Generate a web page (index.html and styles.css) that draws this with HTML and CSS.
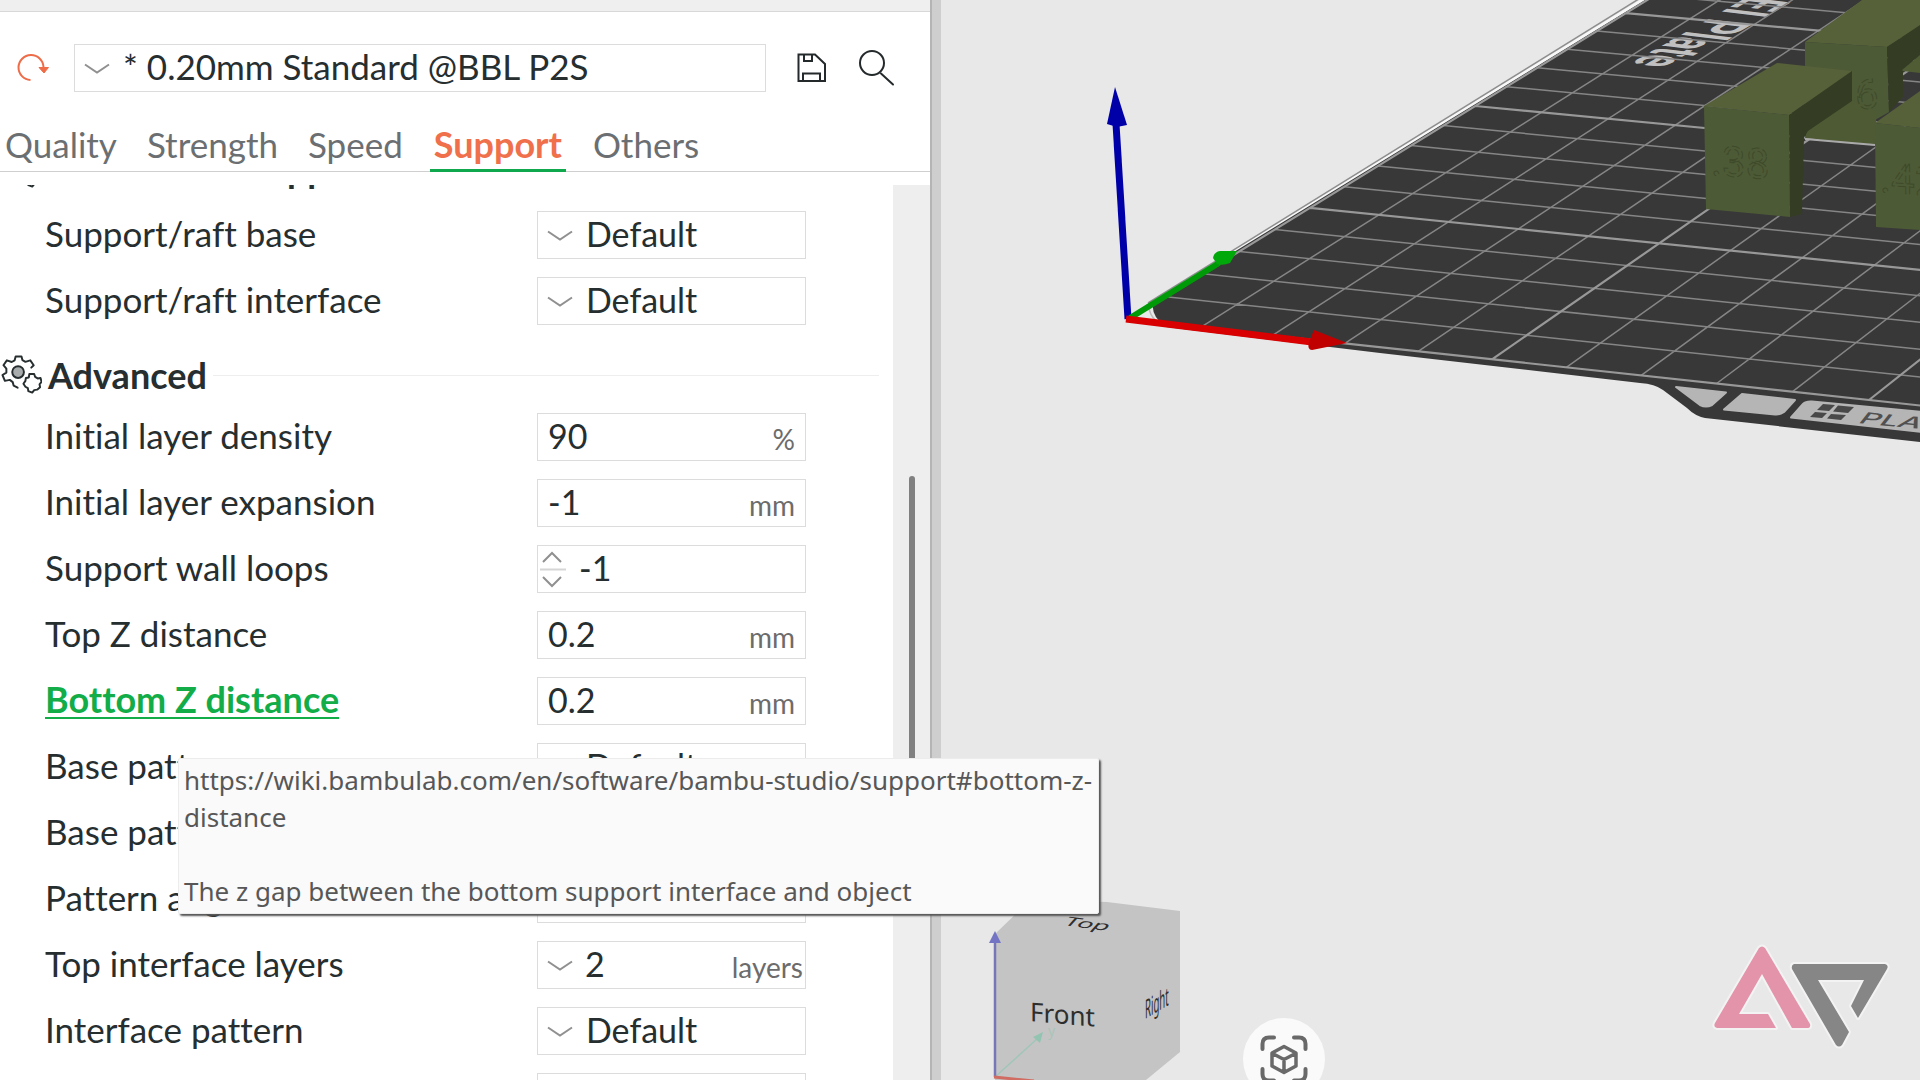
FILE: index.html
```html
<!DOCTYPE html>
<html lang="en">
<head>
<meta charset="utf-8">
<title>Print settings</title>
<link rel="stylesheet" href="styles.css">
</head>
<body>
<svg class="defs" aria-hidden="true">
  <symbol id="chevron" viewBox="0 0 26 12"><path d="M1 1.500L13 9.500L25 1.500" fill="none" stroke="#909090" stroke-width="2"/></symbol>
  <symbol id="gears" viewBox="0 0 42 40">
    <path d="M31 12.500l2.500-2.500-3.500-5-5 1.500-3-1.700L21 1h-6l-1 4-3 1.700L6 5 2.500 10l3 3.500v4L1.500 20 4 26l5-1 3 2.300L13 31l4 2" fill="none" stroke="#262e30" stroke-width="2" stroke-linejoin="round" stroke-linecap="round"/>
    <circle cx="17.500" cy="17" r="6" fill="#a8acac" stroke="#262e30" stroke-width="2"/>
    <path d="M29 19h5l1 3 2.500 1.500 3-.5 1 4-2 2.500.5 3-3 2.500-3 .5L32 38l-4-1.500-.5-3-2.500-1.500L23 29l2-3 .5-3 3-.5z" fill="#fff" stroke="#262e30" stroke-width="2" stroke-linejoin="round"/>
  </symbol>
</svg>
<div class="app">
  <section class="panel">
    <div class="strip"></div>
    <header class="preset">
      <button class="icon-btn reset" aria-label="Reset preset">
        <svg width="32" height="30" viewBox="0 0 32 30"><path d="M13.500 27A12.500 12.500 0 1 1 26.500 14" fill="none" stroke="#ee6c48" stroke-width="2"/><path d="M22 14.500h9.500L27 20z" fill="#ee6c48" stroke="#ee6c48" stroke-linejoin="round"/></svg>
      </button>
      <div class="field preset-field">
        <svg class="chev" aria-hidden="true"><use href="#chevron"/></svg>
        <select aria-label="Preset"><option>* 0.20mm Standard @BBL P2S</option></select>
      </div>
      <button class="icon-btn save" aria-label="Save">
        <svg width="30" height="30" viewBox="0 0 30 30" fill="none" stroke="#24292b" stroke-width="2"><path d="M2.500 1.500H18L28 11v17H1.500V1.500zM7 2v6h8V2M6 28v-7.500h17V28"/></svg>
      </button>
      <button class="icon-btn" aria-label="Search">
        <svg width="36" height="36" viewBox="0 0 36 36" fill="none" stroke="#24292b" stroke-width="2"><circle cx="13" cy="13" r="12"/><path d="M22 23.500L34 34.500" stroke-linecap="round"/></svg>
      </button>
    </header>
    <nav class="tabs">
      <a href="#quality">Quality</a>
      <a href="#strength">Strength</a>
      <a href="#speed">Speed</a>
      <a href="#support" class="active" aria-current="page">Support</a>
      <a href="#others">Others</a>
    </nav>
    <div class="body">
      <form class="settings">
        <h2 class="group first"><svg class="gear"><use href="#gears"/></svg>Filament for supports</h2>
        <div class="row"><label for="base">Support/raft base</label><div class="field"><svg class="chev"><use href="#chevron"/></svg><select id="base"><option>Default</option></select></div></div>
        <div class="row"><label for="iface">Support/raft interface</label><div class="field"><svg class="chev"><use href="#chevron"/></svg><select id="iface"><option>Default</option></select></div></div>
        <h2 class="group"><svg class="gear"><use href="#gears"/></svg>Advanced</h2>
        <div class="row"><label for="density">Initial layer density</label><div class="field"><input id="density" value="90"><span class="unit">%</span></div></div>
        <div class="row"><label for="expansion">Initial layer expansion</label><div class="field"><input id="expansion" value="-1"><span class="unit">mm</span></div></div>
        <div class="row"><label for="loops">Support wall loops</label><div class="field"><svg class="spin" viewBox="0 0 28 38" fill="none" stroke="#909090" stroke-width="2"><path d="M4 12L13 3L22 12M4 27L13 36L22 27"/><path d="M1 19.500H27" stroke="#d5d5d5"/></svg><input id="loops" class="spun" value="-1"></div></div>
        <div class="row"><label for="topz">Top Z distance</label><div class="field"><input id="topz" value="0.2"><span class="unit">mm</span></div></div>
        <div class="row"><label for="bottomz" class="wiki">Bottom Z distance</label><div class="field"><input id="bottomz" value="0.2"><span class="unit">mm</span></div></div>
        <div class="row"><label for="pattern">Base pattern</label><div class="field"><svg class="chev"><use href="#chevron"/></svg><select id="pattern"><option>Default</option></select></div></div>
        <div class="row"><label for="spacing">Base pattern spacing</label><div class="field"><input id="spacing" value="2.5"><span class="unit">mm</span></div></div>
        <div class="row"><label for="angle">Pattern angle</label><div class="field"><input id="angle" value="0"><span class="unit">°</span></div></div>
        <div class="row"><label for="layers">Top interface layers</label><div class="field"><svg class="chev"><use href="#chevron"/></svg><input id="layers" class="combo" value="2"><span class="unit tight">layers</span></div></div>
        <div class="row"><label for="ipattern">Interface pattern</label><div class="field"><svg class="chev"><use href="#chevron"/></svg><select id="ipattern"><option>Default</option></select></div></div>
        <div class="row"><label for="ispacing">Top interface spacing</label><div class="field"><input id="ispacing" value="0.5"><span class="unit">mm</span></div></div>
      </form>
      <div class="track"><div class="thumb"></div></div>
    </div>
    <div class="tooltip" role="tooltip">
      <p>https://wiki.bambulab.com/en/software/bambu-studio/support#bottom-z-<br>distance</p>
      <p>The z gap between the bottom support interface and object</p>
    </div>
  </section>
  <div class="splitter"></div>
  <main class="viewport">
    <svg class="scene" viewBox="941 0 979 1080" preserveAspectRatio="xMinYMin slice" role="img" aria-label="Build plate">
      <defs><clipPath id="plate"><path d="M1154 301Q1149 315 1166 325L1380 353L1640 383Q1655 384 1663 390L1687 408Q1695 416 1705 418L1920 442V0H1645Z"/></clipPath></defs>
      <path d="M1149 302L1640 0h8L1154 303z" fill="#f8f8f8"/>
      <path d="M1154 301Q1149 315 1166 327L1380 353L1640 383Q1655 384 1663 390L1687 408Q1695 416 1705 418L1920 442V0H1645Z" fill="#383838"/>
      <g clip-path="url(#plate)">
        <text class="plate-name" text-anchor="end" transform="matrix(-.56 .32 -.99 -.12 1630 64)">PEI Plate</text>
        <path id="grid-fine" fill="none" stroke="#858585" stroke-width="1.500"/>
        <path id="grid-bold" fill="none" stroke="#989898" stroke-width="2.200"/>
      </g>
      <path d="M1148 303L1642 -3" stroke="#8d8d8d" stroke-width="1.500"/>
      <path d="M1149 309Q1152 320 1160 323" fill="none" stroke="#bbb" stroke-width="1.500"/>
      <g fill="#b5b5b5" stroke="#b5b5b5" stroke-width="2" stroke-linejoin="round">
        <path d="M1676 387L1726 392.500L1712 405Q1706 408 1700 405z"/>
        <path d="M1742 394L1795 400L1784 412Q1780 415 1775 414.500L1724 409.500z"/>
        <path d="M1812 401.500L1922 412V432L1791 417.500L1803 404Q1806 401 1812 401.500z"/>
      </g>
      <path d="M1823 404l12 1-6 6-12-1zM1838 405.500l16 1.500-6 6-15-1.500zM1815 412l12 1-5 5-12-1zM1831 414l15 1-5 5-14-1.500z" fill="#484848"/>
      <text class="plate-tag" transform="matrix(1.600 .15 -.6 .75 1857 423)">PLA</text>
      <g>
        <path d="M1805 42L1862 0H1920V26L1887 47z" fill="#566139"/>
        <path d="M1805 42L1887 47L1889 112L1875 120V145L1820 140L1805 130z" fill="#4d5a36"/>
        <path d="M1887 47L1920 25V55L1903 69V97L1889 112z" fill="#343d24"/>
        <path d="M1902 70L1920 55V73L1903 71z" fill="#505c34"/>
        <path d="M1807 131L1852 100L1876 111V145L1805 138z" fill="#4e5a34"/>
        <path d="M1805 139L1875 145" stroke="#aaa" stroke-width="2"/>
        <path d="M1704 106L1777 63L1852 71L1789 115z" fill="#566139"/>
        <path d="M1789 115L1852 71V101L1808 131L1804 137L1802 214L1790 217z" fill="#343d24"/>
        <path d="M1704 106L1789 115L1790 217L1706 209z" fill="#4d5a36"/>
        <path d="M1875 123L1920 91V128z" fill="#566139"/>
        <path d="M1875 123L1920 128V230L1876 227z" fill="#4d5a36"/>
        <text class="carve" transform="translate(1711 175) skewY(4)">.38</text>
        <text class="carve" transform="translate(1855 109)">6</text>
        <text class="carve" transform="translate(1880 192) skewY(4)">.42</text>
      </g>
      <path d="M1128 319L1116 124" stroke="#0000a8" stroke-width="7"/><path d="M1115 87L1127 125L1117 127L1107 124z" fill="#0000a8"/>
      <path d="M1130 318L1219 263" stroke="#009a08" stroke-width="6"/><path d="M1213 258Q1214 252 1220 251L1237 251L1230 263Q1223 266 1217 264z" fill="#00a80a"/>
      <path d="M1126 319L1312 342" stroke="#d80000" stroke-width="7"/><path d="M1314 330L1347 343L1312 350Q1307 350 1309 342z" fill="#c00000"/>
      <g>
        <path d="M994 935L1030 900L1107 902L1180 911V1052L1146 1080H995z" fill="#c4c4c4"/>
        <text class="face" transform="translate(1030 1021) skewY(5)">Front</text>
        <text class="face" transform="matrix(.37 -.22 0 1 1145 1019)">Right</text>
        <text class="face" transform="matrix(1 .13 -.4 .45 1062 925)">Top</text>
        <path d="M995 1077L1038 1038" stroke="#a0c6b8" stroke-width="1.500"/><path d="M1043 1032L1040 1043L1033 1037z" fill="#93c4b1"/>
        <text class="axis" x="1048" y="1036">y</text>
        <path d="M995 1077V940" stroke="#7676b8" stroke-width="2.500"/><path d="M995 931L1001 943H989z" fill="#7474c4"/>
        <path d="M994 1077L1034 1081" stroke="#d06c62" stroke-width="3"/>
      </g>
    </svg>
    <button class="fit" aria-label="Fit view">
      <svg width="48" height="48" viewBox="0 0 48 48" fill="none" stroke="#696969" stroke-width="4" stroke-linecap="round" stroke-linejoin="round"><path d="M2.500 14V9Q2.500 2.500 9 2.500h5M34 2.500h5Q45.500 2.500 45.500 9v5M45.500 34v5Q45.500 45.500 39 45.500h-5M14 45.500H9Q2.500 45.500 2.500 39v-5"/><path d="M24 11.500L36 18V31L24 37.500L12 31V18zM12.500 18.500L24 24.500L35.500 18.500M24 25V37" stroke-width="3.500"/></svg>
    </button>
    <svg class="logo" viewBox="0 0 180 110" role="img" aria-label="AP">
      <g stroke="#f3f3f3" stroke-width="4" stroke-linejoin="round" paint-order="stroke">
        <path fill="#e394aa" d="M49 6Q52 3 55 6L100 82Q101 86 97 86H82L52 32L29 72H58L66 86H7Q3 85 5 81z"/>
        <path fill="#868686" d="M84 22H175Q179 23 177 27L148 76L141 64L154 38H108L139 90L132 103Q129 106 126 103L82 27Q81 23 84 22z"/>
      </g>
    </svg>
  </main>
</div>
<script src="scene.js"></script>
</body>
</html>
```
FILE: styles.css
```css
* { box-sizing: border-box; }
body { margin: 0; font-family: Lato, "Noto Sans", sans-serif; font-size: 35px; font-variant-ligatures: none; color: #262e30; background: #e8e8e8; }
button, input, select { font: inherit; color: inherit; }
.defs { display: none; }
.app { display: grid; grid-template-columns: 930fr 11px 979fr; height: 100vh; overflow: hidden; }
.panel { position: relative; display: flex; flex-direction: column; min-width: 0; min-height: 0; background: #fff; }
.splitter { background: #cecece; border-left: 2px solid #b4b4b4; }
.strip { flex: none; height: 12px; background: #efefef; border-bottom: 1px solid #d8d8d8; }
.icon-btn { flex: none; display: flex; padding: 0; border: 0; background: none; }
.preset { display: flex; align-items: center; padding: 32px 35px 0 17px; }
.reset { margin-right: 25px; }
.save { margin: 0 32px 0 31px; }
.field { position: relative; display: flex; align-items: center; width: 269px; height: 48px; border: 1px solid #dcdcdc; background: #fff; }
.preset-field { flex: 1; }
.field input, .field select { flex: 1; min-width: 0; width: 100%; height: 100%; padding: 0 0 4px 10px; border: 0; outline: 0; background: none; appearance: none; }
.row .field input, .row .field select { font-size: 34px; }
.field select { padding-left: 48px; }
.field .combo { padding-left: 47px; }
.field .spun { padding-left: 41px; }
.chev { position: absolute; left: 9px; top: 18px; width: 26px; height: 12px; }
.spin { position: absolute; left: 1px; top: 4px; width: 28px; height: 38px; }
.unit { flex: none; padding: 4px 10px 0 0; font-size: 28px; color: #6c6c6c; }
.unit.tight { padding-right: 2px; }
.tabs { display: flex; gap: 24px; margin-top: 28px; padding-left: 2px; border-bottom: 1px solid #cfcfcf; }
.tabs a { padding: 0 3px; height: 52px; line-height: 49px; margin-bottom: -1px; color: #6b6f72; text-decoration: none; }
.tabs .active { padding: 0 4px; font-size: 36px; color: #f0704c; font-weight: 700; border-bottom: 3px solid #10a84c; }
.body { flex: 1; display: flex; min-height: 0; margin-top: 13px; overflow: hidden; }
.settings { flex: 1; display: flex; flex-direction: column; gap: 18px; overflow: hidden; }
.group { flex: none; display: flex; align-items: center; gap: 6px; height: 52px; margin: 6px 14px -6px 0; padding-left: 1px; font-size: 36px; line-height: 50px; }
.group::after { content: ""; flex: 1; height: 1px; background: #eeeeee; }
.group.first { margin-top: -42px; margin-bottom: -2px; }
.group.first::after { display: none; }
.gear { width: 41px; height: 40px; }
.row { flex: none; display: flex; align-items: center; justify-content: space-between; padding: 0 87px 0 45px; }
.row label { padding-bottom: 4px; }
.row .wiki { font-size: 36px; line-height: 42px; color: #12ad48; font-weight: 700; text-decoration: underline; text-decoration-thickness: 2px; text-underline-offset: 4px; }
.track { width: 37px; background: #eeeeee; padding: 291px 15px 0 16px; }
.thumb { height: 340px; border-radius: 3px; background: #808080; }
.tooltip { position: absolute; z-index: 2; left: 178px; top: 758px; width: 921px; padding: 3px 5px; background: #fafafa; border: 1px solid #ececec; border-radius: 2px; box-shadow: 2px 2px 2px #555; font: 26px/37px "Noto Sans", sans-serif; color: #575757; white-space: nowrap; }
.tooltip p { margin: 0 0 37px; }
.tooltip p:last-child { margin: 0; }
.viewport { position: relative; overflow: hidden; background: #e8e8e8; }
.scene { display: block; width: 100%; height: 100%; }
.plate-name { font: 700 62px Roboto, sans-serif; fill: #c0c0c0; }
.plate-tag { font: 500 20px Inter, sans-serif; fill: #505050; }
.carve { font: 42px Roboto, sans-serif; fill: none; stroke: #3f4a2a; stroke-width: 1; stroke-dasharray: 8 3; }
.face { font: 26px "Noto Sans", sans-serif; fill: #2e2e2e; }
.axis { font: 14px "Noto Sans", sans-serif; fill: #a9c4ba; }
.fit { position: absolute; left: 302px; bottom: -20px; display: grid; place-items: center; width: 82px; height: 82px; padding: 0; border: 0; border-radius: 50%; background: #fafafa; }
.logo { position: absolute; right: 25px; bottom: 28px; width: 190px; height: 110px; }
```
FILE: scene.js
```js
// Projects build-plate coordinates (in 10 mm cells) into the viewport.
function project(x, y) {
  const w = 1 - 0.00345 * x + 0.01013 * y;
  return [
    ((67.65 * x + 49.67 * y + 1128) / w).toFixed(1),
    ((6.62 * x - 20.33 * y + 320) / w).toFixed(1)
  ].join(" ");
}

let fine = "";
let bold = "";
for (let i = 0; i <= 25; i++) {
  const lines = "M" + project(i, 0) + "L" + project(i, 25) +
                "M" + project(0, i) + "L" + project(25, i);
  if (i % 5 === 0) bold += lines;
  else fine += lines;
}
document.getElementById("grid-fine").setAttribute("d", fine);
document.getElementById("grid-bold").setAttribute("d", bold);
```
